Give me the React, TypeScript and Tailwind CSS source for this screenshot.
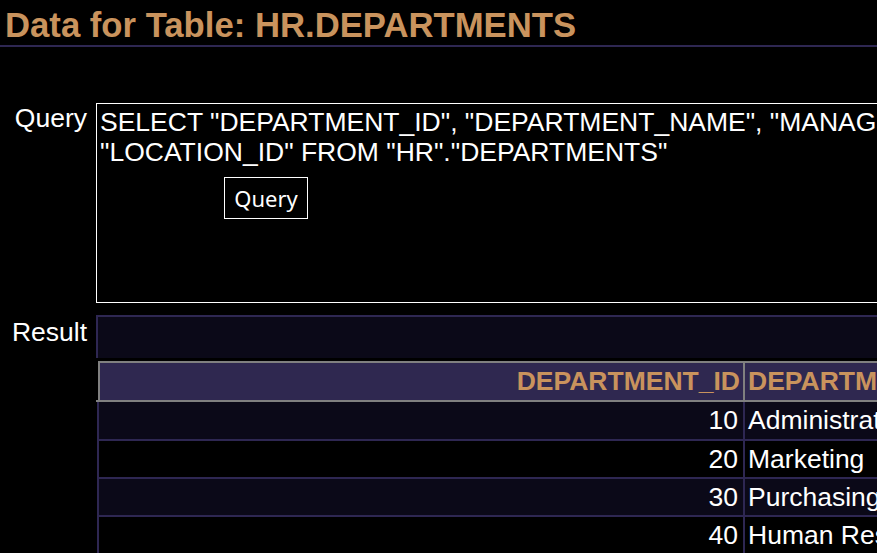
const rows = [
  { id: 10, name: "Administration", manager: 200, location: 1700 },
  { id: 20, name: "Marketing", manager: 201, location: 1800 },
  { id: 30, name: "Purchasing", manager: 114, location: 1700 },
  { id: 40, name: "Human Resources", manager: 203, location: 2400 },
];

const App = () => {
  return (
    <div className="h-screen w-screen overflow-hidden bg-black text-white font-['Liberation_Sans',Arial,sans-serif]">
      <h1 className="pl-[5px] pt-[6px] h-[47px] text-[34.7px] leading-[39px] font-bold text-[#c9935d] border-b-2 border-[#2e2752] whitespace-nowrap">
        Data for Table: HR.DEPARTMENTS
      </h1>

      {/* query row */}
      <div className="flex mt-[56px]">
        <div className="w-[87px] shrink-0 text-right text-[26.5px] leading-[30px]">Query</div>
        <div className="relative ml-[9px] w-[1400px] h-[200px] shrink-0 border border-white px-[3px] pt-[3px] text-[26.5px] leading-[30px] whitespace-nowrap">
          SELECT "DEPARTMENT_ID", "DEPARTMENT_NAME", "MANAGER_ID",
          <br />
          "LOCATION_ID" FROM "HR"."DEPARTMENTS"
          <button className="absolute left-[127px] top-[73px] w-[84px] h-[42px] border border-white bg-black text-white text-[22px] font-['Noto_Sans',sans-serif] leading-[30px]">
            Query
          </button>
        </div>
      </div>

      {/* result row */}
      <div className="flex mt-[12px]">
        <div className="w-[87px] shrink-0 pt-[2px] text-right text-[26.5px] leading-[30px]">Result</div>
        <div className="ml-[9px] flex flex-col shrink-0 w-[1400px]">
          <div className="h-[43px] border-l-2 border-t-2 border-[#2e2752] bg-[#0b0918]" />
          <div className="mt-[3px] ml-[2px] flex border-l-2 border-t-2 border-[#808080] bg-[#2f2850] h-[39px] text-[26.5px] leading-[37px] font-bold text-[#c9935d] whitespace-nowrap">
            <div className="w-[645px] shrink-0 text-right pr-[3px] border-r-2 border-[#808080]">DEPARTMENT_ID</div>
            <div className="w-[300px] shrink-0 pl-[3px] border-r-2 border-[#808080]">DEPARTMENT_NAME</div>
            <div className="w-[170px] shrink-0 pl-[3px] border-r-2 border-[#808080]">MANAGER_ID</div>
            <div className="pl-[3px]">LOCATION_ID</div>
          </div>
          <div className="h-[2px] bg-[#808080]" />
          {rows.map((r, i) => (
            <div
              key={r.id}
              className={`ml-[1px] flex border-l-2 border-b-2 border-[#2e2752] text-[26.5px] whitespace-nowrap ${
                i === 0 ? "h-[39px] leading-[37px]" : "h-[38px] leading-[36px]"
              } ${i % 2 === 0 ? "bg-[#0b0918]" : "bg-black"}`}
            >
              <div className="w-[646px] shrink-0 text-right pr-[5px] border-r-2 border-[#2e2752]">{r.id}</div>
              <div className="w-[300px] shrink-0 pl-[3px] border-r-2 border-[#2e2752]">{r.name}</div>
              <div className="w-[170px] shrink-0 text-right pr-[4px] border-r-2 border-[#2e2752]">{r.manager}</div>
              <div className="w-[170px] shrink-0 text-right pr-[4px]">{r.location}</div>
            </div>
          ))}
        </div>
      </div>
    </div>
  );
};

export default App;
